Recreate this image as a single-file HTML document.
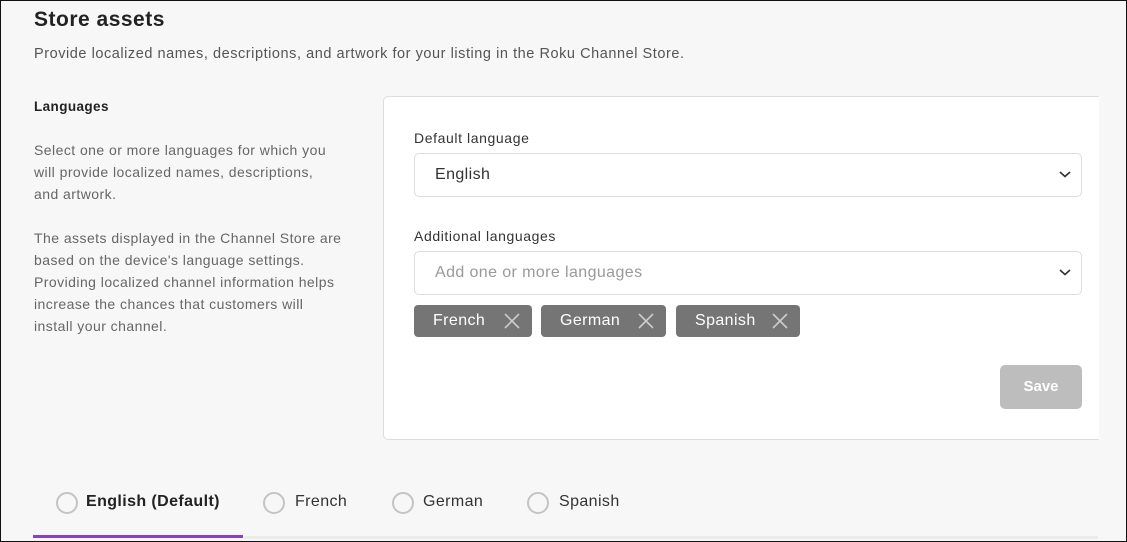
<!DOCTYPE html>
<html><head><meta charset="utf-8"><style>
*{box-sizing:border-box;margin:0;padding:0}
html,body{width:1127px;height:542px;overflow:hidden}
body{background:#f7f7f7;font-family:"Liberation Sans",sans-serif;color:#333;position:relative;border:1px solid #111;}
.a{position:absolute}
h1{position:absolute;left:33px;top:7px;font-size:21px;font-weight:bold;color:#222;letter-spacing:0.5px}
.sub{left:33px;top:45px;font-size:14.5px;color:#555;letter-spacing:0.55px}
.lh{left:33px;top:98px;font-size:13.5px;font-weight:bold;color:#222;letter-spacing:0.4px}
.p{left:33px;font-size:14px;line-height:22px;color:#666;width:340px;letter-spacing:0.45px}
.card{left:382px;top:95px;width:716px;height:344px;background:#fff;border:1px solid #ddd;border-right:none;border-radius:5px 0 0 5px}
.lbl{font-size:14px;color:#333;letter-spacing:0.6px}
.sel{left:413px;width:668px;height:44px;border:1px solid #ddd;border-radius:5px;background:#fff;font-size:16px;padding:12px 20px;letter-spacing:0.4px}
.chev{position:absolute;right:10px;top:15px}
.tag{top:304px;height:32px;background:#757575;border-radius:4px;color:#fff;font-size:16px;padding:7px 0 0 19px;letter-spacing:0.4px}
.tag svg{position:absolute;right:12px;top:8px}
.save{left:999px;top:364px;width:82px;height:44px;background:#bdbdbd;border-radius:5px;color:#fff;font-weight:bold;font-size:15px;text-align:center;line-height:44px}
.tab{top:492px;font-size:16px;color:#333;letter-spacing:0.4px}
.rad{top:491px;width:22px;height:22px;border:2px solid #c4c4c4;border-radius:50%}
</style></head><body>
<h1>Store assets</h1>
<div class="a sub">Provide localized names, descriptions, and artwork for your listing in the Roku Channel Store.</div>
<div class="a lh">Languages</div>
<div class="a p" style="top:138px">Select one or more languages for which you<br>will provide localized names, descriptions,<br>and artwork.</div>
<div class="a p" style="top:226px">The assets displayed in the Channel Store are<br>based on the device's language settings.<br>Providing localized channel information helps<br>increase the chances that customers will<br>install your channel.</div>
<div class="a card"></div>
<div class="a lbl" style="left:413px;top:129px">Default language</div>
<div class="a sel" style="top:152px">English<svg class="chev" width="12" height="10" viewBox="0 0 12 10"><path d="M1 3l5 4.5L11 3" fill="none" stroke="#333" stroke-width="1.6"/></svg></div>
<div class="a lbl" style="left:413px;top:227px">Additional languages</div>
<div class="a sel" style="top:250px;color:#999">Add one or more languages<svg class="chev" width="12" height="10" viewBox="0 0 12 10"><path d="M1 3l5 4.5L11 3" fill="none" stroke="#333" stroke-width="1.6"/></svg></div>
<div class="a tag" style="left:413px;width:118px">French<svg width="16" height="16" viewBox="0 0 16 16"><path d="M1 1l14 14M15 1L1 15" stroke="#ccc" stroke-width="1.6"/></svg></div>
<div class="a tag" style="left:540px;width:125px">German<svg width="16" height="16" viewBox="0 0 16 16"><path d="M1 1l14 14M15 1L1 15" stroke="#ccc" stroke-width="1.6"/></svg></div>
<div class="a tag" style="left:675px;width:124px">Spanish<svg width="16" height="16" viewBox="0 0 16 16"><path d="M1 1l14 14M15 1L1 15" stroke="#ccc" stroke-width="1.6"/></svg></div>
<div class="a save">Save</div>
<div class="a rad" style="left:55px"></div><div class="a tab" style="left:85px;font-weight:bold;color:#222">English (Default)</div>
<div class="a rad" style="left:262px"></div><div class="a tab" style="left:294px">French</div>
<div class="a rad" style="left:391px"></div><div class="a tab" style="left:422px">German</div>
<div class="a rad" style="left:526px"></div><div class="a tab" style="left:558px">Spanish</div>
<div class="a" style="left:242px;top:535px;width:855px;height:3px;background:#ececec"></div>
<div class="a" style="left:32px;top:534px;width:210px;height:3px;background:#8a3fc8"></div>
</body></html>
